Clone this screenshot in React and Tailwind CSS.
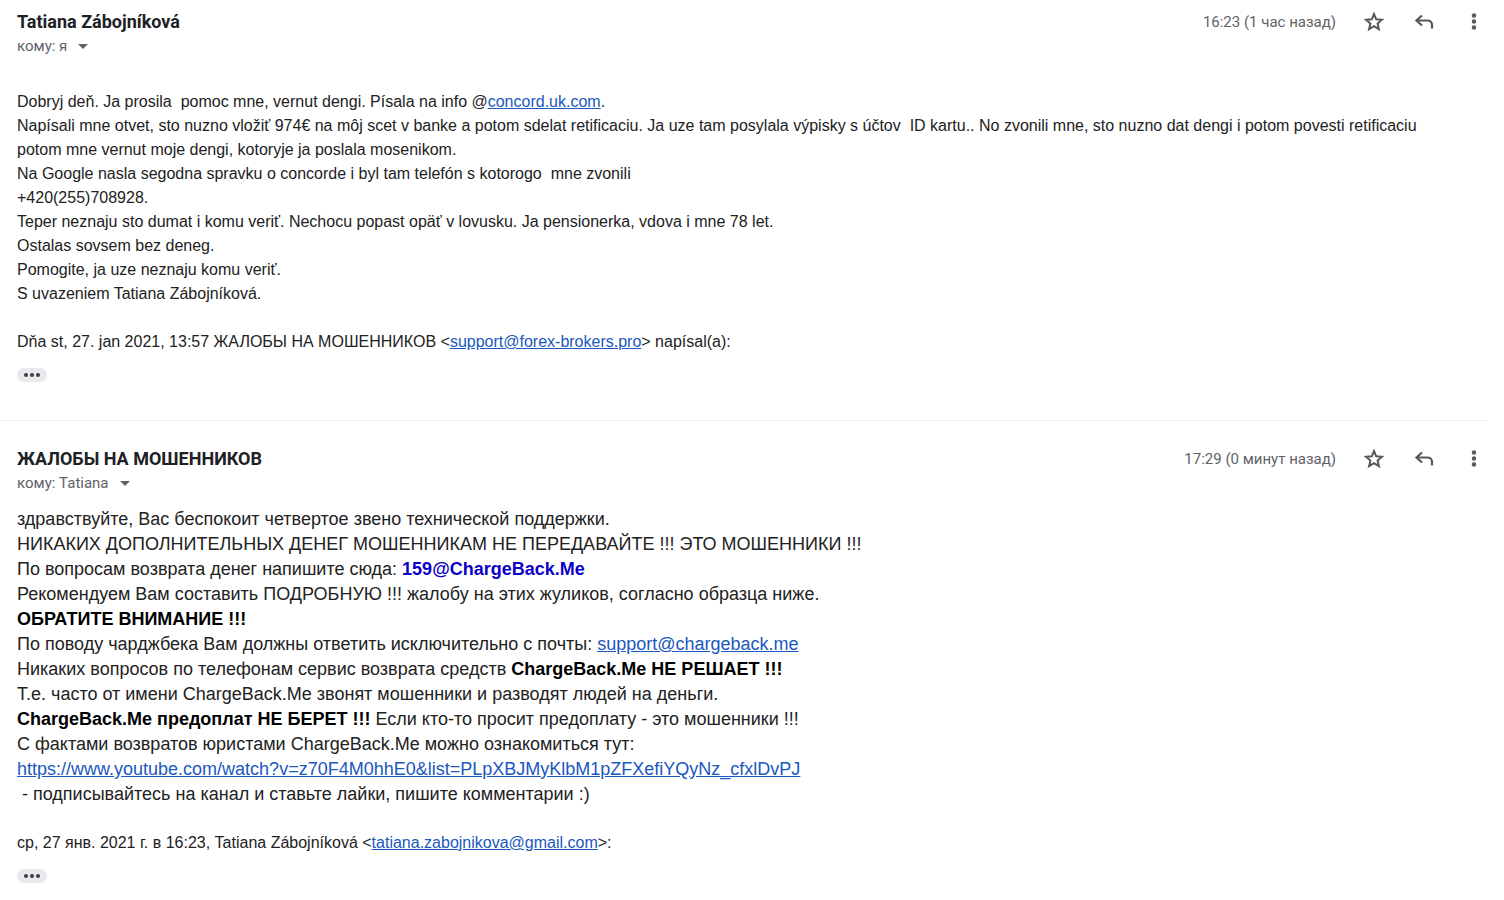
import { MdArrowDropDown } from 'react-icons/md';

const linkClass = 'text-[#1a58be] underline';

function StarIcon() {
  return (
    <svg viewBox="0 0 24 24" className="size-6" fill="none" stroke="currentColor" strokeWidth="2">
      <path d="M12 4 L14.2 9.3 L19.9 9.8 L15.6 13.5 L16.9 19.1 L12 16.1 L7.1 19.1 L8.4 13.5 L4.1 9.8 L9.8 9.3 Z" />
    </svg>
  );
}

function ReplyIcon() {
  return (
    <svg viewBox="0 0 20 16" className="h-4 w-5" fill="none" stroke="currentColor" strokeWidth="2.2">
      <path d="M8 1.5 L2.5 6.5 L8 11.5" />
      <path d="M2.5 6.5 H13 Q18 6.5 18 11 V14.5" />
    </svg>
  );
}

function MoreIcon() {
  return (
    <svg viewBox="0 0 24 24" className="size-6" fill="currentColor">
      <circle cx="12" cy="5.5" r="2.2" />
      <circle cx="12" cy="11.5" r="2.2" />
      <circle cx="12" cy="17.5" r="2.2" />
    </svg>
  );
}

function MessageHeader({ name, recipient, time }) {
  return (
    <header className="flex items-start justify-between">
      <div>
        <h2 className="font-['Roboto',sans-serif] text-[18px] leading-6 font-bold text-[#202124]">{name}</h2>
        <button type="button" className="flex h-6 items-center text-[15px] text-[#5f6368]">
          <span>кому: {recipient}</span>
          <MdArrowDropDown className="ml-1 size-6" />
        </button>
      </div>
      <div className="flex h-6 items-center text-[#55585c]">
        <time className="mr-[26px] text-[15px] text-[#5f6368]">{time}</time>
        <button type="button" aria-label="Пометить" className="mr-7">
          <StarIcon />
        </button>
        <button type="button" aria-label="Ответить" className="mr-7">
          <ReplyIcon />
        </button>
        <button type="button" aria-label="Ещё">
          <MoreIcon />
        </button>
      </div>
    </header>
  );
}

function ShowTrimmed() {
  return (
    <button
      type="button"
      aria-label="Показать скрытый текст"
      className="mt-3.5 flex h-3.5 w-[30px] items-center justify-center gap-0.5 rounded-full bg-[#e8eaed]"
    >
      <span className="size-1 rounded-full bg-[#3c4043]" />
      <span className="size-1 rounded-full bg-[#3c4043]" />
      <span className="size-1 rounded-full bg-[#3c4043]" />
    </button>
  );
}

export default function App() {
  return (
    <main className="bg-white font-['Roboto',sans-serif]">
      {/* Incoming message */}
      <article className="mr-[18px] border-b border-[#eceff1] pt-2.5 pb-[38px] pl-[17px]">
        <MessageHeader name="Tatiana Zábojníková" recipient="я" time="16:23 (1 час назад)" />
        <div className="mt-8 pr-8 font-['Liberation_Sans',Arial,sans-serif] text-base leading-6 text-[#222222]">
          <p>
            Dobryj deň. Ja prosila&nbsp; pomoc mne, vernut dengi. Písala na info @
            <a href="#concord" className={linkClass}>concord.uk.com</a>.
          </p>
          <p>
            Napísali mne otvet, sto nuzno vložiť 974€ na môj scet v banke a potom sdelat retificaciu. Ja uze tam
            posylala výpisky s účtov&nbsp; ID kartu.. No zvonili mne, sto nuzno dat dengi i potom povesti retificaciu
            potom mne vernut moje dengi, kotoryje ja poslala mosenikom.
          </p>
          <p>Na Google nasla segodna spravku o concorde i byl tam telefón s kotorogo&nbsp; mne zvonili</p>
          <p>+420(255)708928.</p>
          <p>Teper neznaju sto dumat i komu veriť. Nechocu popast opäť v lovusku. Ja pensionerka, vdova i mne 78 let.</p>
          <p>Ostalas sovsem bez deneg.</p>
          <p>Pomogite, ja uze neznaju komu veriť.</p>
          <p>S uvazeniem Tatiana Zábojníková.</p>
          <p className="mt-6">
            Dňa st, 27. jan 2021, 13:57 ЖАЛОБЫ НА МОШЕННИКОВ &lt;
            <a href="mailto:support@forex-brokers.pro" className={linkClass}>support@forex-brokers.pro</a>&gt; napísal(a):
          </p>
          <ShowTrimmed />
        </div>
      </article>

      {/* Reply */}
      <article className="mr-[18px] pt-[26px] pb-4 pl-[17px]">
        <MessageHeader name="ЖАЛОБЫ НА МОШЕННИКОВ" recipient="Tatiana" time="17:29 (0 минут назад)" />
        <div className="mt-3 font-['Liberation_Sans',Arial,sans-serif] text-[18px] leading-[25px] text-[#222222]">
          <p>здравствуйте, Вас беспокоит четвертое звено технической поддержки.</p>
          <p>НИКАКИХ ДОПОЛНИТЕЛЬНЫХ ДЕНЕГ МОШЕННИКАМ НЕ ПЕРЕДАВАЙТЕ !!! ЭТО МОШЕННИКИ !!!</p>
          <p>
            По вопросам возврата денег напишите сюда: <b className="text-[#0b00c8]">159@ChargeBack.Me</b>
          </p>
          <p>Рекомендуем Вам составить ПОДРОБНУЮ !!! жалобу на этих жуликов, согласно образца ниже.</p>
          <p className="font-bold text-black">ОБРАТИТЕ ВНИМАНИЕ !!!</p>
          <p>
            По поводу чарджбека Вам должны ответить исключительно с почты:{' '}
            <a href="mailto:support@chargeback.me" className={linkClass}>support@chargeback.me</a>
          </p>
          <p>
            Никаких вопросов по телефонам сервис возврата средств{' '}
            <b className="text-black">ChargeBack.Me НЕ РЕШАЕТ !!!</b>
          </p>
          <p>Т.е. часто от имени ChargeBack.Me звонят мошенники и разводят людей на деньги.</p>
          <p>
            <b className="text-black">ChargeBack.Me предоплат НЕ БЕРЕТ !!!</b> Если кто-то просит предоплату - это
            мошенники !!!
          </p>
          <p>С фактами возвратов юристами ChargeBack.Me можно ознакомиться тут:</p>
          <p>
            <a href="#youtube" className={linkClass}>
              https://www.youtube.com/watch?v=z70F4M0hhE0&amp;list=PLpXBJMyKlbM1pZFXefiYQyNz_cfxlDvPJ
            </a>
          </p>
          <p>&nbsp;- подписывайтесь на канал и ставьте лайки, пишите комментарии :)</p>
        </div>
        <div className="mt-6 font-['Liberation_Sans',Arial,sans-serif] text-base leading-6 text-[#222222]">
          <p>
            ср, 27 янв. 2021 г. в 16:23, Tatiana Zábojníková &lt;
            <a href="mailto:tatiana.zabojnikova@gmail.com" className={linkClass}>tatiana.zabojnikova@gmail.com</a>&gt;:
          </p>
          <ShowTrimmed />
        </div>
      </article>
    </main>
  );
}
